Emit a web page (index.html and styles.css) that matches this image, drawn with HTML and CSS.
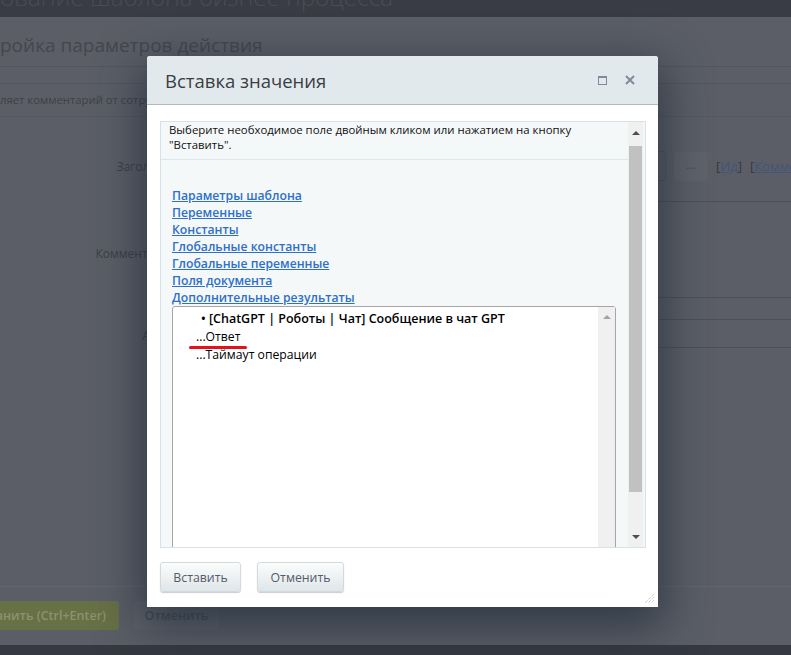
FILE: index.html
```html
<!DOCTYPE html>
<html lang="ru">
  <head>
    <meta charset="UTF-8" />
    <meta name="viewport" content="width=device-width, initial-scale=1.0" />
    <title>Вставка значения</title>
    <link rel="stylesheet" href="styles.css">
  </head>
  <body>
    <div class="top-bar">
      <h1>ование шаблона бизнес-процесса</h1>
    </div>
    <div class="slider">
      <div class="slider-title">ройка параметров действия</div>
      <div class="slider-tabs"></div>
      <div class="slider-desc">ляет комментарий от сотрудника</div>
      <div class="form">
        <div class="form-row row-input">
          <div class="form-label">Заголовок:</div>
          <div class="form-field">
            <div class="fake-input"></div>
            <span class="dots-btn">...</span>
            <span class="field-link">[<u>Ид</u>]</span>
            <span class="field-link">[<u>Комментарий</u>]</span>
          </div>
        </div>
        <div class="form-row row-area">
          <div class="form-label">Комментарий:</div>
          <div class="form-field">
            <div class="fake-area tall"></div>
          </div>
        </div>
        <div class="form-row row-small">
          <div class="form-label">Автор:</div>
          <div class="form-field">
            <div class="fake-area"></div>
          </div>
        </div>
      </div>
      <div class="slider-footer">
        <span class="save-btn">Сохранить (Ctrl+Enter)</span>
        <span class="cancel-btn">Отменить</span>
      </div>
    </div>

    <div class="popup">
      <div class="popup-head">
        <span class="popup-title">Вставка значения</span>
        <span class="popup-icons">
          <span class="icon-max"></span>
          <svg class="icon-close" width="10" height="10" viewBox="0 0 10 10">
            <path d="M1 1L9 9M9 1L1 9" stroke="#7d8c9b" stroke-width="2" />
          </svg>
        </span>
      </div>
      <div class="popup-body">
        <div class="scroll-box">
          <div class="scroll-content">
            <div class="hint">
              Выберите необходимое поле двойным кликом или нажатием на кнопку
              "Вставить".
            </div>
            <div class="groups">
              <a href="#">Параметры шаблона</a>
              <a href="#">Переменные</a>
              <a href="#">Константы</a>
              <a href="#">Глобальные константы</a>
              <a href="#">Глобальные переменные</a>
              <a href="#">Поля документа</a>
              <a href="#">Дополнительные результаты</a>
            </div>
            <div class="list-box">
              <div class="list-items">
                <div class="list-group">• [ChatGPT | Роботы | Чат] Сообщение в чат GPT</div>
                <div class="list-item marked">...Ответ</div>
                <div class="list-item">...Таймаут операции</div>
              </div>
              <div class="bar bar-light">
                <span class="arrow-up"></span>
                <span class="bar-fill"></span>
                <span class="arrow-down"></span>
              </div>
            </div>
          </div>
          <div class="bar">
            <span class="arrow-up"></span>
            <span class="thumb"></span>
            <span class="bar-fill"></span>
            <span class="arrow-down"></span>
          </div>
        </div>
      </div>
      <div class="popup-foot">
        <button type="button">Вставить</button>
        <button type="button" class="wide">Отменить</button>
      </div>
      <svg class="grip" width="11" height="11" viewBox="0 0 11 11">
        <path d="M10 1L1 10M10 4L4 10M10 7L7 10" stroke="#b4b4b4" stroke-width="1" stroke-dasharray="1 1" />
      </svg>
    </div>
  </body>
</html>
```

FILE: styles.css
```css
body {
  margin: 0;
  width: 791px;
  height: 655px;
  overflow: hidden;
  position: relative;
  background-color: #363941;
  font-family: "Open Sans", "Noto Sans", sans-serif;
}
.top-bar {
  height: 17px;
  overflow: hidden;
  background-color: #393c44;
}
.top-bar h1 {
  margin: -16px 0 0;
  font-size: 24.3px;
  line-height: 26px;
  font-weight: 300;
  color: #494c54;
  white-space: nowrap;
}
.slider {
  height: 628px;
  display: flex;
  flex-direction: column;
  background-color: #5b5e66;
}
.slider-title {
  box-sizing: border-box;
  height: 50px;
  padding-top: 11px;
  font-size: 19px;
  line-height: 34px;
  color: #44474e;
  border-bottom: 1px solid #53565d;
  white-space: nowrap;
}
.slider-tabs {
  height: 16px;
  border-bottom: 1px solid #53565d;
}
.slider-desc {
  height: 32px;
  line-height: 32px;
  font-size: 11.3px;
  color: #3e4147;
  border-bottom: 1px solid #55585f;
  white-space: nowrap;
}
.form {
  flex: 1;
}
.form-row {
  display: grid;
  grid-template-columns: 190px 1fr;
}
.form-label {
  text-align: right;
  padding-right: 10px;
  font-size: 12px;
  color: #3c3f45;
  white-space: nowrap;
}
.row-input {
  margin-top: 34px;
  height: 30px;
  align-items: center;
}
.form-field {
  display: flex;
  align-items: center;
  gap: 8px;
  white-space: nowrap;
}
.fake-input {
  width: 474px;
  height: 28px;
  border: 1px solid #52555c;
  border-radius: 2px;
}
.dots-btn {
  width: 34px;
  height: 29px;
  line-height: 26px;
  text-align: center;
  font-size: 12px;
  color: #45484f;
  background-color: #5f626a;
  border-radius: 3px;
}
.field-link {
  font-size: 13px;
  color: #36393f;
}
.field-link u {
  color: #42557a;
}
.row-area {
  margin-top: 20px;
}
.row-area .form-label {
  padding-top: 44px;
}
.fake-area {
  width: 700px;
  height: 27px;
  border-top: 1px solid #4c4f56;
  border-bottom: 1px solid #4c4f56;
}
.fake-area.tall {
  height: 95px;
}
.row-small {
  margin-top: 21px;
}
.row-small .form-label {
  padding-top: 8px;
}
.slider-footer {
  height: 44px;
  display: flex;
  gap: 15px;
  padding-top: 14px;
  border-top: 1px solid #62656c;
}
.save-btn {
  height: 29px;
  width: 119px;
  overflow: hidden;
  display: flex;
  justify-content: flex-end;
  padding-right: 13px;
  box-sizing: border-box;
  white-space: nowrap;
  line-height: 29px;
  font-size: 12.5px;
  font-weight: 600;
  color: #8b9272;
  background-color: #687045;
  border-radius: 0 3px 3px 0;
}
.cancel-btn {
  height: 29px;
  width: 85px;
  text-align: center;
  line-height: 29px;
  font-size: 12.5px;
  font-weight: 600;
  color: #474a52;
  background-color: #5f626a;
  border-radius: 3px;
}

.popup {
  position: absolute;
  left: 147px;
  top: 56px;
  width: 511px;
  height: 551px;
  display: flex;
  flex-direction: column;
  background-color: #fff;
  border-radius: 3px 3px 0 0;
  box-shadow: 0 14px 45px 6px rgba(30, 44, 58, 0.72);
}
.popup-head {
  height: 48px;
  display: flex;
  align-items: center;
  justify-content: space-between;
  padding: 0 23px 0 18px;
  background-color: #e2e9ec;
  border-bottom: 1px solid #b2babe;
  border-radius: 3px 3px 0 0;
}
.popup-title {
  font-size: 18.5px;
  color: #3a3d42;
}
.popup-icons {
  display: flex;
  align-items: center;
  gap: 18px;
}
.icon-max {
  box-sizing: border-box;
  width: 9px;
  height: 9px;
  border: 1px solid #7d8c9b;
  border-top-width: 2px;
}
.popup-body {
  padding: 16px 12px 0 13px;
}
.scroll-box {
  height: 425px;
  display: flex;
  border: 1px solid #d6e2e8;
  background-color: #f5f8f9;
  overflow: hidden;
}
.scroll-content {
  flex: 1;
}
.hint {
  padding: 0 8px 7px;
  font-size: 11.4px;
  line-height: 15px;
  color: #111;
  border-bottom: 1px solid #dde6eb;
}
.groups {
  display: flex;
  flex-direction: column;
  align-items: flex-start;
  padding: 27px 0 0 11px;
}
.groups a {
  font-size: 12.2px;
  line-height: 17px;
  font-weight: 600;
  color: #2e6fc9;
}
.list-box {
  margin-left: 11px;
  width: 444px;
  height: 262px;
  box-sizing: border-box;
  display: flex;
  background-color: #fff;
  border: 1px solid #a6a6a6;
  border-radius: 3px 3px 0 0;
}
.list-items {
  flex: 1;
  padding-top: 3px;
  font-size: 12.2px;
  line-height: 18px;
  color: #000;
}
.list-group {
  padding-left: 28px;
  font-size: 12.5px;
  font-weight: 600;
}
.list-item {
  padding-left: 23px;
}
.marked {
  position: relative;
}
.marked::after {
  content: "";
  position: absolute;
  left: 16px;
  bottom: -3px;
  width: 58px;
  height: 3px;
  border-radius: 2px;
  background-color: #e2131b;
}
.bar {
  width: 15px;
  margin-right: 2px;
  display: flex;
  flex-direction: column;
  align-items: center;
  background-color: #f0f0f0;
}
.bar-light {
  width: 17px;
  margin-right: 0;
}
.arrow-up,
.arrow-down {
  width: 0;
  height: 0;
  border-left: 4px solid transparent;
  border-right: 4px solid transparent;
}
.arrow-up {
  margin: 9px 0 11px;
  border-bottom: 4px solid #4d4d4d;
}
.arrow-down {
  margin: 9px 0 8px;
  border-top: 4px solid #4d4d4d;
}
.bar-light .arrow-up {
  margin: 8px 0 9px;
  border-bottom-color: #a3a3a3;
}
.bar-light .arrow-down {
  border-top-color: #a3a3a3;
}
.thumb {
  width: 13px;
  height: 346px;
  background-color: #c1c1c1;
}
.bar-fill {
  flex: 1;
}
.popup-foot {
  display: flex;
  gap: 16px;
  padding: 14px 0 0 13px;
}
.popup-foot button {
  width: 81px;
  height: 30px;
  padding: 0;
  font-family: inherit;
  font-size: 12.3px;
  color: #535c69;
  border: 1px solid #d3dade;
  border-radius: 3px;
  background: linear-gradient(#fbfcfc, #dfe6e9);
  box-shadow: 0 1px 1px rgba(0, 0, 0, 0.2);
}
.popup-foot button.wide {
  width: 87px;
}
.grip {
  position: absolute;
  right: 3px;
  bottom: 3px;
}
```
